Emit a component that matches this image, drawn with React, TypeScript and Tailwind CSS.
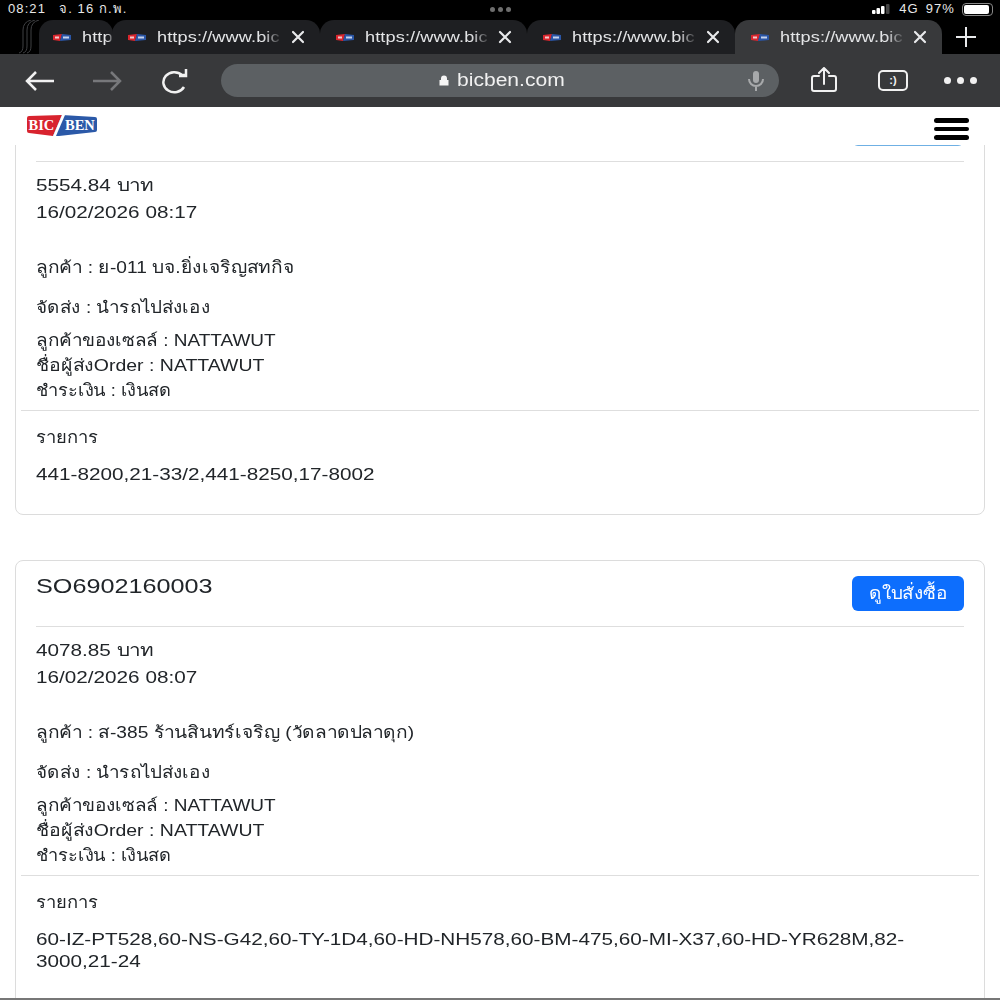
const font = "font-['Liberation_Sans','Noto_Sans',sans-serif]";

function Favicon() {
  return (
    <svg className="shrink-0" width="18" height="7" viewBox="0 0 18 7">
      <path d="M0 1 L9 0 L7 7 L0 6 Z" fill="#d9262e" />
      <path d="M9 0 L18 1 L18 6 L7 7 Z" fill="#2a55a5" />
      <rect x="2" y="2.5" width="4" height="2" fill="#f3c9cc" />
      <rect x="10" y="2.5" width="6" height="2" fill="#c4d2ec" />
    </svg>
  );
}

function Tab({ active, partial }: { active?: boolean; partial?: boolean }) {
  return (
    <div
      className={`relative flex h-[34px] shrink-0 items-center overflow-hidden rounded-t-[14px] ${
        partial ? "w-[74px] pl-[14px]" : "w-[207.5px] pl-[16px] pr-[15px]"
      } ${active ? "bg-[#38393b]" : "bg-[#1e1f22]"}`}
    >
      <Favicon />
      <div className={`${partial ? "w-[31px]" : "w-[126px]"} ml-[11px] shrink-0 whitespace-nowrap [mask-image:linear-gradient(to_right,black_84%,transparent)]`}>
        <span className="inline-block origin-left scale-x-[1.17] text-[15.5px] tracking-[0.1px] text-[#e4e5e7]">
          {partial ? "http" : "https://www.bic"}
        </span>
      </div>
      {!partial && (
        <svg className="ml-auto shrink-0" width="14" height="14" viewBox="0 0 14 14" stroke="#e8e9eb" strokeWidth="2.2" strokeLinecap="round">
          <path d="M2 2 L12 12 M12 2 L2 12" />
        </svg>
      )}
    </div>
  );
}

function Row({
  children,
  scale = "scale-x-[1.15]",
  className = "leading-[25px]",
}: {
  children: React.ReactNode;
  scale?: string;
  className?: string;
}) {
  return <div className={`ml-[20px] origin-left whitespace-nowrap text-[16.5px] text-[#212529] ${scale} ${className}`}>{children}</div>;
}

const numeric = "scale-x-[1.255]";

function OrderCard({
  id,
  total,
  date,
  customer,
  items,
  className = "",
}: {
  id?: string;
  total: string;
  date: string;
  customer: string;
  items: string[];
  className?: string;
}) {
  return (
    <section className={`mx-[15px] rounded-[8px] border border-[#dcdcdc] bg-white ${className}`}>
      <div className="mx-[20px] flex h-[66px] justify-between border-b border-[#dedede] pt-[15px]">
        <div className="-mt-[2px] origin-left scale-x-[1.2] text-[21px] leading-[24px] text-[#212529]">{id}</div>
        <button className={`h-[35px] w-[112px] rounded-[6px] text-white ${id ? "bg-[#0d6efd]" : "bg-[#6fb0e4]"}`}>
          {id && <span className="inline-block scale-x-[1.15] text-[16.5px]">ดูใบสั่งซื้อ</span>}
        </button>
      </div>
      <Row scale={numeric} className="mt-[11px] leading-[25px]">
        {total} บาท
      </Row>
      <Row scale={numeric} className="mt-[2px] leading-[25px]">
        {date}
      </Row>
      <Row scale="scale-x-[1.16]" className="mt-[30px] leading-[25px]">
        ลูกค้า : {customer}
      </Row>
      <Row scale="scale-x-[1.145]" className="mt-[15px] leading-[25px]">
        จัดส่ง : นำรถไปส่งเอง
      </Row>
      <Row className="mt-[8px] leading-[25px]">ลูกค้าของเซลล์ : NATTAWUT</Row>
      <Row scale="scale-x-[1.18]">ชื่อผู้ส่งOrder : NATTAWUT</Row>
      <Row scale="scale-x-[1.105]">ชำระเงิน : เงินสด</Row>
      <div className="mx-[5px] mt-[7px] border-t border-[#dedede]" />
      <Row scale="scale-x-[1.115]" className="mt-[14px] leading-[25px]">
        รายการ
      </Row>
      <div className="mt-[13px]">
        {items.map((line) => (
          <Row key={line} scale={numeric} className="leading-[22px]">
            {line}
          </Row>
        ))}
      </div>
    </section>
  );
}

export default function App() {
  return (
    <div className={`flex h-[1000px] w-[1000px] flex-col overflow-hidden bg-white ${font}`}>
      <div className="flex h-[20px] shrink-0 items-center justify-between bg-black pb-[2px] pl-[8px] pr-[7px] text-[13px] tracking-[1.1px] text-[#e8e8e8]">
        <div className="flex w-[300px] gap-[13px]">
          <span>08:21</span>
          <span>จ. 16 ก.พ.</span>
        </div>
        <div className="flex gap-[3px]">
          <i className="size-[5px] rounded-full bg-[#6e6e6e]" />
          <i className="size-[5px] rounded-full bg-[#6e6e6e]" />
          <i className="size-[5px] rounded-full bg-[#6e6e6e]" />
        </div>
        <div className="flex w-[300px] items-center justify-end gap-[7px]">
          <svg className="mr-[2px]" width="18" height="10" viewBox="0 0 18 10" fill="#fff">
            <rect x="0" y="6" width="3.5" height="4" rx="1" />
            <rect x="4.5" y="4" width="3.5" height="6" rx="1" />
            <rect x="9" y="2" width="3.5" height="8" rx="1" />
            <rect x="14" y="0" width="3.5" height="10" rx="1" fill="#444" />
          </svg>
          <span>4G</span>
          <span>97%</span>
          <div className="h-[13px] w-[31px] rounded-[4px] border border-[#888] p-[1px]">
            <div className="h-full w-[92%] rounded-[2px] bg-white" />
          </div>
        </div>
      </div>

      <div className="relative flex h-[34px] shrink-0 items-end bg-black">
        <svg className="ml-[17px] shrink-0" width="22" height="34" viewBox="0 0 22 34" fill="none" stroke="#3f4043">
          <path d="M2 33 Q6 32 6 26 V10 Q6 2 14 0" />
          <path d="M6 33 Q10 32 10 26 V10 Q10 2 18 0" />
          <path d="M10 33 Q14 32 14 26 V10 Q14 2 22 0" />
        </svg>
        <Tab partial />
        <div className="-ml-[1px] flex">
          <Tab />
          <Tab />
          <Tab />
          <Tab active />
        </div>
        <svg className="ml-[14px] mb-[7px]" width="20" height="20" viewBox="0 0 20 20" stroke="#e8e9eb" strokeWidth="2">
          <path d="M10 0 V20 M0 10 H20" />
        </svg>
      </div>

      <div className="flex h-[53px] shrink-0 items-center bg-[#38393b]">
        <svg className="ml-[25px]" width="30" height="22" viewBox="0 0 30 22" fill="none" stroke="#f1f1f1" strokeWidth="2.5">
          <path d="M29 11 H2 M11 2 L2 11 L11 20" />
        </svg>
        <svg className="ml-[37px]" width="30" height="22" viewBox="0 0 30 22" fill="none" stroke="#77787b" strokeWidth="2.5">
          <path d="M1 11 H28 M19 2 L28 11 L19 20" />
        </svg>
        <svg className="ml-[38px]" width="28" height="26" viewBox="0 0 28 26" fill="none" stroke="#f1f1f1" strokeWidth="2.5">
          <path d="M24 19 A11 10 0 1 1 22 7 L26 7 M26 1 V8 H19" />
        </svg>
        <div className="relative ml-[33px] flex h-[33px] w-[558px] items-center rounded-full bg-[#5c6063] pl-[218px] text-[#f1f1f1]">
          <svg className="mr-[8px]" width="10" height="11" viewBox="0 0 10 11" fill="#f5f5f5">
            <path d="M2 5 V3.5 A3 3 0 0 1 8 3.5 V5 H9.5 V10.5 H0.5 V5 Z" />
          </svg>
          <span className="inline-block origin-left scale-x-[1.17] text-[18px]">bicben.com</span>
          <svg className="absolute right-[14px]" width="18" height="22" viewBox="0 0 18 22" fill="none">
            <rect x="6" y="1" width="6" height="12" rx="3" fill="#a7a9ab" />
            <path d="M2 9 A7 7 0 0 0 16 9 M9 16 V21" stroke="#a7a9ab" strokeWidth="2" />
          </svg>
        </div>
        <svg className="mb-[3px] ml-[32px]" width="26" height="25" viewBox="0 0 26 25" fill="none" stroke="#f1f1f1" strokeWidth="2" strokeLinecap="round" strokeLinejoin="round">
          <path d="M8 9 H3 Q1 9 1 11 V22 Q1 24 3 24 H23 Q25 24 25 22 V11 Q25 9 23 9 H18 M13 17 V2 M8 6 L13 1 L18 6" />
        </svg>
        <div className="ml-[41px] flex h-[21px] w-[30px] items-center justify-center rounded-[5px] border-2 border-[#f1f1f1] text-[11px] font-bold text-[#f1f1f1]">
          :)
        </div>
        <div className="ml-[36px] flex gap-[6px]">
          <i className="size-[7px] rounded-full bg-[#f1f1f1]" />
          <i className="size-[7px] rounded-full bg-[#f1f1f1]" />
          <i className="size-[7px] rounded-full bg-[#f1f1f1]" />
        </div>
      </div>

      <main className="relative flex-1 overflow-hidden">
        <header className="absolute inset-x-0 top-0 z-10 flex h-[38px] items-start justify-between bg-white pl-[27px] pr-[31px]">
          <svg className="mt-[8px]" width="70" height="21" viewBox="0 0 70 21">
            <path d="M0 3 Q0 1 2 1 L35 0 L26 21 L2 18 Q0 18 0 16 Z" fill="#d8232e" />
            <path d="M35 0 L68 2 Q70 2 70 4 V15 Q70 17 68 17 L32 21 L26 21 Z" fill="#2b59a8" />
            <path d="M35 0 L38 0 L29 21 L26 21 Z" fill="#fff" />
            <text x="1.5" y="15" fontFamily="Liberation Serif" fontWeight="700" fontSize="14.5" fill="#fff">BIC</text>
            <text x="38" y="14.5" fontFamily="Liberation Serif" fontWeight="700" fontSize="14.5" fill="#fff">BEN</text>
          </svg>
          <div className="mt-[11px] flex w-[35px] flex-col gap-[4px]">
            <i className="h-[4.5px] rounded-full bg-black" />
            <i className="h-[4.5px] rounded-full bg-black" />
            <i className="h-[4.5px] rounded-full bg-black" />
          </div>
        </header>
        <div className="-mt-[12px]">
          <OrderCard
            className="pb-[29px]"
            total="5554.84"
            date="16/02/2026 08:17"
            customer="ย-011 บจ.ยิ่งเจริญสทกิจ"
            items={["441-8200,21-33/2,441-8250,17-8002"]}
          />
          <OrderCard
            className="mt-[45px] pb-[60px]"
            id="SO6902160003"
            total="4078.85"
            date="16/02/2026 08:07"
            customer="ส-385 ร้านสินทร์เจริญ (วัดลาดปลาดุก)"
            items={["60-IZ-PT528,60-NS-G42,60-TY-1D4,60-HD-NH578,60-BM-475,60-MI-X37,60-HD-YR628M,82-", "3000,21-24"]}
          />
        </div>
      </main>
      <div className="h-[2px] shrink-0 bg-[#777]" />
    </div>
  );
}
